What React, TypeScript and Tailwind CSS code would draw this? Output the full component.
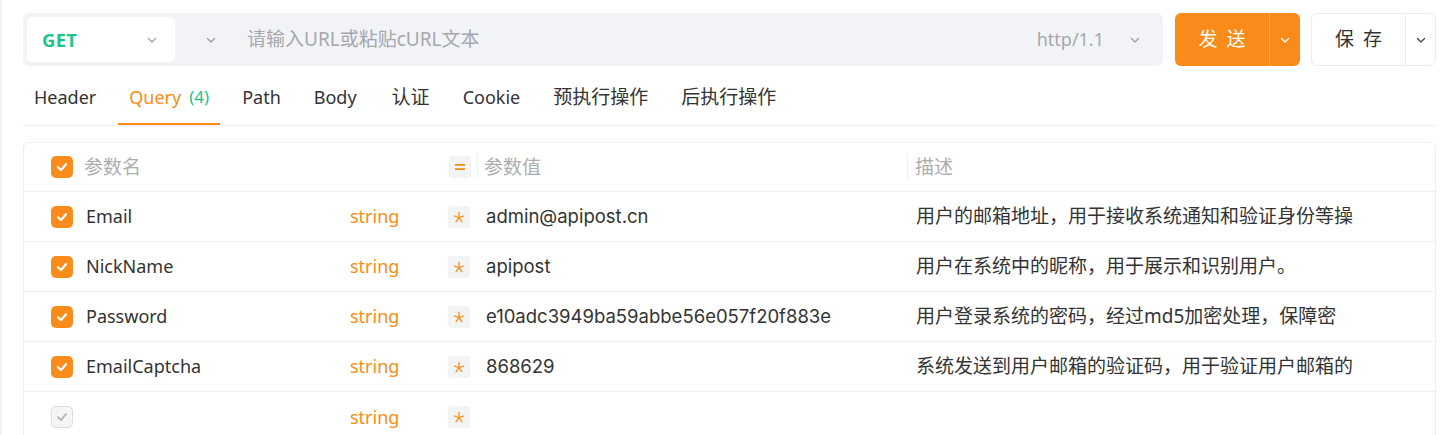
import React from "react";

const Chevron = ({ color = "#9a9ca3", size = 12 }: { color?: string; size?: number }) => (
  <svg width={size} height={size} viewBox="0 0 12 12" fill="none">
    <polyline points="2.5,4.5 6,8 9.5,4.5" stroke={color} strokeWidth="1.3" strokeLinecap="round" strokeLinejoin="round" />
  </svg>
);

const Check = ({ disabled = false }: { disabled?: boolean }) =>
  disabled ? (
    <div className="w-[22px] h-[22px] rounded-[5px] bg-[#f5f5f5] border border-[#dcdcdc] flex items-center justify-center shrink-0">
      <svg width="14" height="14" viewBox="0 0 14 14" fill="none">
        <polyline points="3,7.2 6,10 11,4.2" stroke="#b8b8b8" strokeWidth="2" strokeLinecap="round" strokeLinejoin="round" />
      </svg>
    </div>
  ) : (
    <div className="w-[22px] h-[22px] rounded-[5px] bg-[#fa8c1c] flex items-center justify-center shrink-0">
      <svg width="14" height="14" viewBox="0 0 14 14" fill="none">
        <polyline points="3,7.2 6,10 11,4.2" stroke="#ffffff" strokeWidth="2.2" strokeLinecap="round" strokeLinejoin="round" />
      </svg>
    </div>
  );

const Star = () => (
  <div className="w-[22px] h-[22px] rounded-[3px] bg-[#f3f4f6] flex items-center justify-center shrink-0">
    <svg width="12" height="12" viewBox="0 0 12 12" fill="none">
      <g stroke="#fa8c16" strokeWidth="1.3" strokeLinecap="round" strokeLinejoin="round">
        <line x1="6" y1="6.6" x2="6" y2="1.4" />
        <line x1="6" y1="6.6" x2="1.3" y2="5" />
        <line x1="6" y1="6.6" x2="10.7" y2="5" />
        <line x1="6" y1="6.6" x2="3.1" y2="10.6" />
        <line x1="6" y1="6.6" x2="8.9" y2="10.6" />
      </g>
    </svg>
  </div>
);

const rows = [
  { name: "Email", value: "admin@apipost.cn", desc: "用户的邮箱地址，用于接收系统通知和验证身份等操" },
  { name: "NickName", value: "apipost", desc: "用户在系统中的昵称，用于展示和识别用户。" },
  { name: "Password", value: "e10adc3949ba59abbe56e057f20f883e", desc: "用户登录系统的密码，经过md5加密处理，保障密" },
  { name: "EmailCaptcha", value: "868629", desc: "系统发送到用户邮箱的验证码，用于验证用户邮箱的" },
];

const tabs = [
  { t: "Header", cjk: false },
  { t: "Query", cjk: false },
  { t: "Path", cjk: false },
  { t: "Body", cjk: false },
  { t: "认证", cjk: true },
  { t: "Cookie", cjk: false },
  { t: "预执行操作", cjk: true },
  { t: "后执行操作", cjk: true },
];

export default function App() {
  return (
    <div
      className="w-[1440px] h-[435px] overflow-hidden bg-white border-l-2 border-[#f1f2f5] pl-[21px] pr-[4px] pt-[13px] text-[#333333]"
      style={{ fontFamily: '"Noto Sans", "Noto Sans CJK SC", sans-serif' }}
    >
      {/* Top bar */}
      <div className="flex h-[53px]">
        <div className="w-[1140px] bg-[#f2f3f7] rounded-[6px] p-[4px] flex items-center">
          <div className="w-[148px] h-full bg-white rounded-[5px] flex items-center pl-[15px] pr-[17px] justify-between">
            <span className="text-[18.5px] font-bold text-[#1dc48e] tracking-[0.3px]">GET</span>
            <Chevron />
          </div>
          <div className="ml-[30px]">
            <Chevron />
          </div>
          <span className="ml-[30px] text-[19px] text-[#a5a7ad]">请输入URL或粘贴cURL文本</span>
          <div className="flex-1" />
          <span className="text-[18px] text-[#a5a7ad]">http/1.1</span>
          <div className="ml-[25px] mr-[18px]">
            <Chevron />
          </div>
        </div>
        <div className="ml-[12px] w-[125px] bg-[#f98b1a] rounded-[6px] flex">
          <div className="w-[94px] flex items-center justify-center text-white text-[19px] tracking-[9px] pl-[9px]">发送</div>
          <div className="w-px bg-[#fbab5c]" />
          <div className="flex-1 flex items-center justify-center">
            <Chevron color="#ffffff" />
          </div>
        </div>
        <div className="ml-[11px] w-[125px] bg-white border border-[#ececec] rounded-[6px] flex">
          <div className="w-[93px] flex items-center justify-center text-[#333] text-[19px] tracking-[9px] pl-[9px]">保存</div>
          <div className="w-px bg-[#ececec]" />
          <div className="flex-1 flex items-center justify-center">
            <Chevron color="#444444" />
          </div>
        </div>
      </div>

      {/* Tabs */}
      <div className="h-[60px] border-b border-[#efefef] flex gap-[11px] w-[1413px]">
        {tabs.map(({ t, cjk }) => (
          <div
            key={t}
            className={`relative px-[11px] pt-[3px] flex items-center ${cjk ? "text-[19px]" : "text-[18px]"} ${t === "认证" ? "ml-[2px]" : ""}`}
          >
            {t === "Query" ? (
              <>
                <span className="text-[#fa8c16]">Query</span>
                <span className="ml-[8px] text-[17px] text-[#1dc48e]">(4)</span>
                <div className="absolute left-0 right-0 bottom-0 h-[2px] bg-[#fa8c16]" />
              </>
            ) : (
              <span className="text-[#333]">{t}</span>
            )}
          </div>
        ))}
      </div>

      {/* Table */}
      <div className="mt-[16px] w-[1413px] border border-[#eeeeee] rounded-[6px]">
        <div className="h-[49px] flex items-center pl-[27px] border-b border-[#f0f0f0]">
          <Check />
          <span className="ml-[11px] w-[365px] text-[19px] text-[#adadad]">参数名</span>
          <div className="w-[22px] h-[22px] rounded-[3px] bg-[#f3f4f6] flex items-center justify-center shrink-0">
            <svg width="12" height="12" viewBox="0 0 12 12">
              <rect x="1" y="3" width="10" height="1.8" fill="#fa8c16" />
              <rect x="1" y="7.2" width="10" height="1.8" fill="#fa8c16" />
            </svg>
          </div>
          <div className="ml-[6px] w-px h-[26px] bg-[#f0f0f0]" />
          <span className="ml-[6px] w-[423px] text-[19px] text-[#adadad]">参数值</span>
          <div className="w-px h-[26px] bg-[#f0f0f0]" />
          <span className="ml-[7px] text-[19px] text-[#adadad]">描述</span>
        </div>
        {rows.map((r) => (
          <div key={r.name} className="h-[50px] flex items-center pl-[27px] border-b border-[#f0f0f0]">
            <Check />
            <span className="ml-[13px] w-[264px] text-[18px] text-[#333]">{r.name}</span>
            <span className="w-[98px] text-[18px] text-[#fa8c16]">string</span>
            <Star />
            <span
              className="ml-[16px] w-[430px] text-[18.5px] text-[#333] whitespace-nowrap"
              style={{ fontFamily: '"Inter", "Noto Sans", sans-serif' }}
            >
              {r.value}
            </span>
            <span className="text-[19px] text-[#333] whitespace-nowrap">{r.desc}</span>
          </div>
        ))}
        <div className="h-[50px] flex items-center pl-[27px]">
          <Check disabled />
          <span className="ml-[13px] w-[264px]" />
          <span className="w-[98px] text-[18px] text-[#fa8c16]">string</span>
          <Star />
        </div>
      </div>
    </div>
  );
}
